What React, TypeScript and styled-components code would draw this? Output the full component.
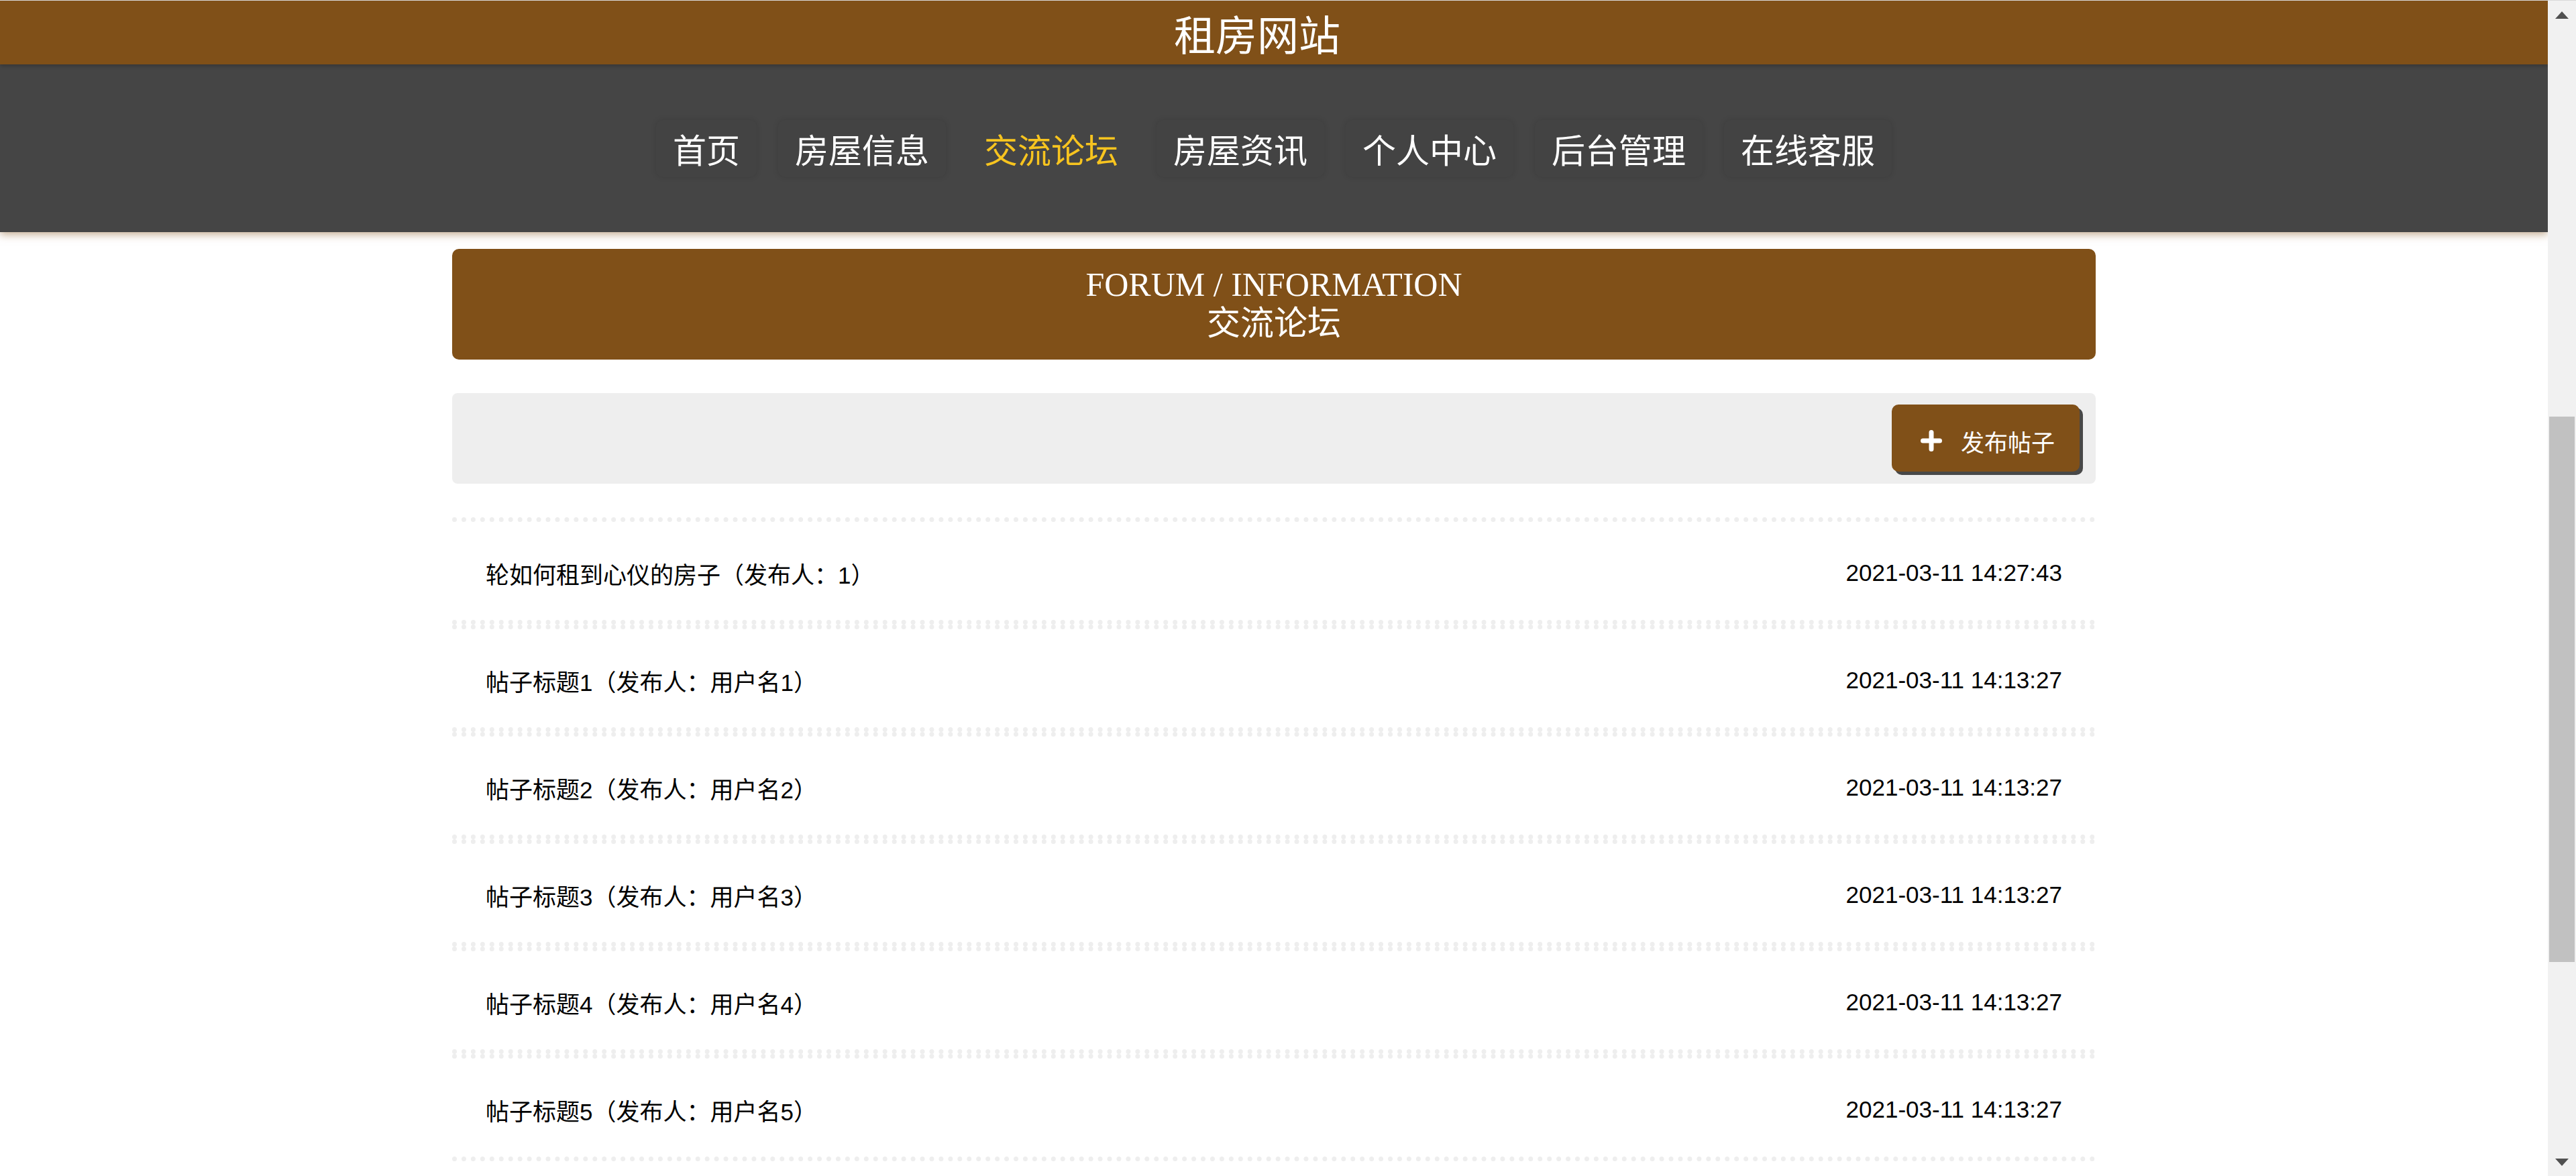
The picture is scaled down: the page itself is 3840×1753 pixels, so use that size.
import React from "react";
import styled, { createGlobalStyle } from "styled-components";

const BROWN = "#805018";

const GlobalStyle = createGlobalStyle`
  html, body {
    margin: 0;
    padding: 0;
    overflow: hidden;
    background: #ffffff;
  }
  * { box-sizing: border-box; }
`;

const Root = styled.div`
  display: flex;
  height: 1753px;
  overflow: hidden;
  border-top: 1px solid #d9d9d9;
  font-family: "Noto Sans CJK SC", "Liberation Sans", sans-serif;
`;

const Main = styled.div`
  flex: 1;
  min-width: 0;
  display: flex;
  flex-direction: column;
  overflow: hidden;
`;

const Header = styled.header`
  position: relative;
  z-index: 2;
  height: 95px;
  flex-shrink: 0;
  background: ${BROWN};
  color: #ffffff;
  display: flex;
  align-items: center;
  justify-content: center;
  padding-right: 50px;
  font-size: 62px;
  line-height: 1;
  box-shadow: 0 2px 6px rgba(0, 0, 0, 0.25);
`;

const Nav = styled.nav`
  position: relative;
  z-index: 1;
  height: 250px;
  flex-shrink: 0;
  background: #454545;
  display: flex;
  align-items: center;
  justify-content: center;
  gap: 32px;
  box-shadow: 0 3px 12px rgba(128, 80, 24, 0.5);
`;

const NavItem = styled.a<{ $active?: boolean }>`
  height: 85px;
  padding: 0 25px;
  display: flex;
  align-items: center;
  border-radius: 10px;
  font-size: 50px;
  line-height: 1;
  text-decoration: none;
  cursor: pointer;
  color: ${(p) => (p.$active ? "#f7c41f" : "#ffffff")};
  background: ${(p) => (p.$active ? "transparent" : "#434343")};
  box-shadow: ${(p) => (p.$active ? "none" : "0 0 8px rgba(0, 0, 0, 0.12)")};
`;

const Content = styled.div`
  width: 2450px;
  margin: 25px auto 0;
  display: flex;
  flex-direction: column;
`;

const Banner = styled.div`
  background: ${BROWN};
  border-radius: 10px;
  padding: 25px;
  text-align: center;
  color: #ffffff;
  font-family: "Liberation Serif", "Noto Sans CJK SC", serif;
  font-size: 50px;
  line-height: 57.5px;
`;

const BannerLine = styled.div``;

const Toolbar = styled.div`
  margin-top: 50px;
  height: 135px;
  background: #eeeeee;
  border-radius: 8px;
  display: flex;
  align-items: center;
  justify-content: flex-end;
  padding: 0 24px;
`;

const AddButton = styled.button`
  width: 280px;
  height: 100px;
  margin-top: -1px;
  border: none;
  border-radius: 10px;
  background: ${BROWN};
  box-shadow: 5px 5px 0 #484848;
  color: #ffffff;
  display: flex;
  align-items: center;
  justify-content: center;
  gap: 28px;
  padding: 8px 0 0 6px;
  font-family: "Noto Sans CJK SC", "Liberation Sans", sans-serif;
  font-size: 35px;
  line-height: 1;
  cursor: pointer;
`;

const List = styled.ul`
  list-style: none;
  margin: 50px 0 0;
  padding: 0;
`;

const Row = styled.li`
  height: 160px;
  border-top: 7px dotted #eeeeee;
  border-bottom: 7px dotted #eeeeee;
  display: flex;
  align-items: center;
  justify-content: space-between;
  padding: 6px 50px 0;
`;

const RowTitle = styled.span`
  font-family: "Liberation Sans", "Noto Sans CJK SC", sans-serif;
  font-size: 35px;
  color: #000000;
`;

const RowDate = styled.span`
  font-family: "Liberation Sans", Arial, sans-serif;
  font-size: 35px;
  color: #000000;
`;

const ScrollTrack = styled.div`
  width: 42px;
  flex-shrink: 0;
  background: #f1f1f1;
  display: flex;
  flex-direction: column;
  align-items: center;
`;

const ScrollArrow = styled.div`
  height: 42px;
  width: 42px;
  display: flex;
  align-items: center;
  justify-content: center;
`;

const ScrollThumb = styled.div`
  margin-top: 578px;
  width: 38px;
  height: 813px;
  background: #c1c1c1;
`;

const ScrollSpacer = styled.div`
  flex: 1;
`;

const PlusIcon = () => (
  <svg width="32" height="32" viewBox="0 0 32 32">
    <path
      d="M3.5 16H28.5M16 3.5V28.5"
      stroke="#ffffff"
      strokeWidth="7"
      strokeLinecap="round"
      fill="none"
    />
  </svg>
);

const Triangle = ({ down }: { down?: boolean }) => (
  <svg width="20" height="11" viewBox="0 0 20 11">
    <path d={down ? "M0 0H20L10 11Z" : "M10 0L20 11H0Z"} fill="#505050" />
  </svg>
);

const navItems = ["首页", "房屋信息", "交流论坛", "房屋资讯", "个人中心", "后台管理", "在线客服"];

const posts = [
  { title: "轮如何租到心仪的房子（发布人：1）", time: "2021-03-11 14:27:43" },
  { title: "帖子标题1（发布人：用户名1）", time: "2021-03-11 14:13:27" },
  { title: "帖子标题2（发布人：用户名2）", time: "2021-03-11 14:13:27" },
  { title: "帖子标题3（发布人：用户名3）", time: "2021-03-11 14:13:27" },
  { title: "帖子标题4（发布人：用户名4）", time: "2021-03-11 14:13:27" },
  { title: "帖子标题5（发布人：用户名5）", time: "2021-03-11 14:13:27" },
];

export default function App() {
  return (
    <>
      <GlobalStyle />
      <Root>
        <Main>
          <Header>租房网站</Header>
          <Nav>
            {navItems.map((n) => (
              <NavItem key={n} $active={n === "交流论坛"}>
                {n}
              </NavItem>
            ))}
          </Nav>
          <Content>
            <Banner>
              <BannerLine>FORUM / INFORMATION</BannerLine>
              <BannerLine>交流论坛</BannerLine>
            </Banner>
            <Toolbar>
              <AddButton>
                <PlusIcon />
                <span>发布帖子</span>
              </AddButton>
            </Toolbar>
            <List>
              {posts.map((p, i) => (
                <Row key={i}>
                  <RowTitle>{p.title}</RowTitle>
                  <RowDate>{p.time}</RowDate>
                </Row>
              ))}
            </List>
          </Content>
        </Main>
        <ScrollTrack>
          <ScrollArrow>
            <Triangle />
          </ScrollArrow>
          <ScrollThumb />
          <ScrollSpacer />
          <ScrollArrow>
            <Triangle down />
          </ScrollArrow>
        </ScrollTrack>
      </Root>
    </>
  );
}
